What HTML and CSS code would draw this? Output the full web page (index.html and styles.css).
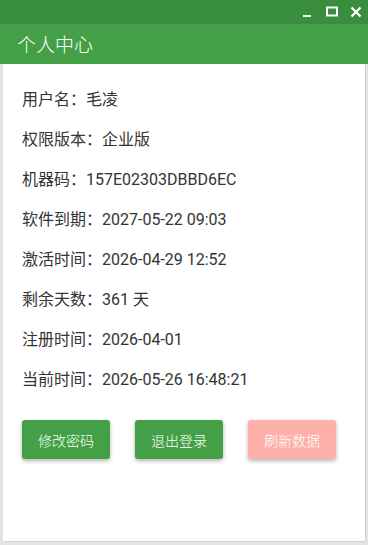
FILE: index.html
```html
<!DOCTYPE html>
<html lang="zh-CN">
<head>
  <meta charset="UTF-8">
  <title>个人中心</title>
  <meta name="viewport" content="width=device-width, initial-scale=1">
  <link rel="stylesheet" href="styles.css">
</head>
<body>

  <div class="window">
    <div class="titlebar">
      <span class="win-btn">
        <svg width="12" height="12" viewBox="0 0 12 12"><rect x="1" y="9" width="8" height="2" fill="#fff"/></svg>
      </span>
      <span class="win-btn">
        <svg width="12" height="12" viewBox="0 0 12 12"><rect x="1" y="1.5" width="10" height="8" fill="none" stroke="#fff" stroke-width="2"/></svg>
      </span>
      <span class="win-btn">
        <svg width="12" height="12" viewBox="0 0 12 12"><path d="M1.5 1.5 L10.5 10.5 M10.5 1.5 L1.5 10.5" stroke="#fff" stroke-width="2.2"/></svg>
      </span>
    </div>

    <div class="header">个人中心</div>

    <div class="content">
      <div class="info">
        <p>用户名：毛凌</p>
        <p>权限版本：企业版</p>
        <p>机器码：157E02303DBBD6EC</p>
        <p>软件到期：2027-05-22 09:03</p>
        <p>激活时间：2026-04-29 12:52</p>
        <p>剩余天数：361 天</p>
        <p>注册时间：2026-04-01</p>
        <p>当前时间：2026-05-26 16:48:21</p>
      </div>

      <div class="actions">
        <button class="btn">修改密码</button>
        <button class="btn">退出登录</button>
        <button class="btn btn-light">刷新数据</button>
      </div>
    </div>
  </div>

</body>
</html>
```

FILE: styles.css
```css
* { margin: 0; padding: 0; box-sizing: border-box; }
body {
  width: 368px;
  height: 545px;
  overflow: hidden;
  background: #fff;
  font-family: Roboto, "Noto Sans CJK SC", sans-serif;
}
.window {
  height: 545px;
  display: flex;
  flex-direction: column;
  background: #e3e3e3;
}
.titlebar {
  height: 24px;
  background: #388e3c;
  display: flex;
  justify-content: flex-end;
  align-items: center;
  padding-right: 5px;
  gap: 10px;
}
.win-btn { width: 14px; height: 14px; display: flex; align-items: center; justify-content: center; }
.header {
  height: 40px;
  background: #43a047;
  color: #fff;
  font-size: 19px;
  line-height: 40px;
  padding-left: 17px;
  font-family: "Noto Sans CJK SC", sans-serif;
  font-weight: 300;
}
.content {
  flex: 1;
  margin: 0 3px 4px 3px;
  background: #fff;
  padding: 22px 0 0 19px;
  box-shadow: 1px 1px 0 #d0d0d0;
}
.info p {
  height: 40px;
  line-height: 28px;
  font-size: 16px;
  color: #333;
}
.actions {
  display: flex;
  gap: 25px;
  margin-top: 14px;
}
.btn {
  width: 88px;
  height: 39px;
  border: none;
  border-radius: 3px;
  background: #43a047;
  color: #fff;
  font-size: 14px;
  font-family: "Noto Sans CJK SC", sans-serif;
  font-weight: 300;
  box-shadow: 0 2px 4px rgba(0, 0, 0, 0.3);
}
.btn-light { background: #ffb0aa; }
```
